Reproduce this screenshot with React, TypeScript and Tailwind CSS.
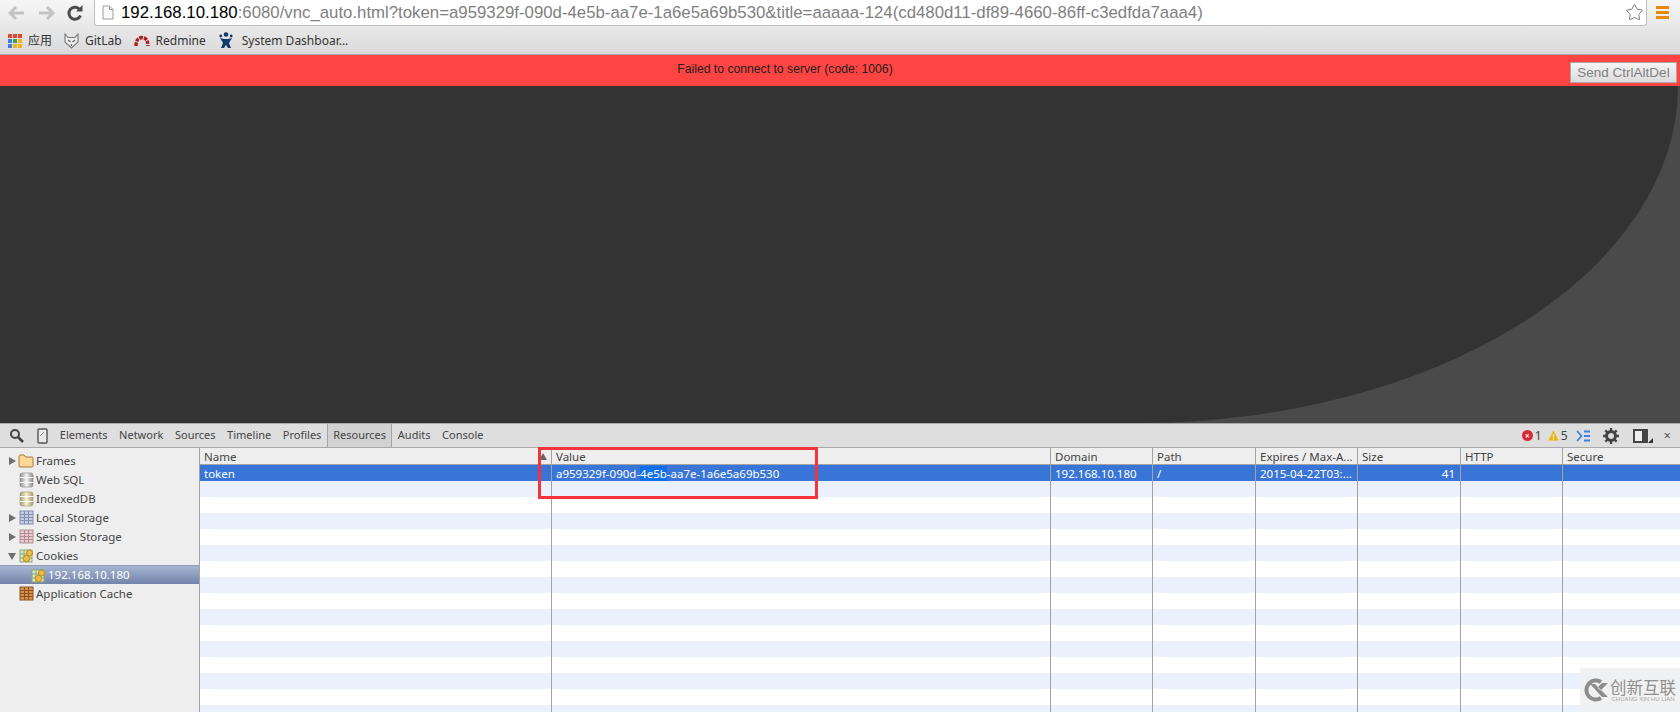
import { Star } from 'lucide-react';

const uiFont = "font-['Noto_Sans','Noto_Sans_CJK_SC',sans-serif]";

function TableIcon({ fill, line }: { fill: string; line: string }) {
  return (
    <svg width="15" height="15" viewBox="0 0 15 15" className="shrink-0">
      <rect x="1" y="1" width="13" height="13" fill={fill} stroke={line} />
      <path d="M1 4.5H14M1 7.5H14M1 10.5H14M5.5 1V14M9.5 1V14" stroke={line} fill="none" />
    </svg>
  );
}

function CookieIcon() {
  return (
    <svg width="15" height="15" viewBox="0 0 15 15" className="shrink-0">
      <rect x="1" y="2" width="12" height="12" fill="#d6e8bd" stroke="#8aa877" />
      <path d="M1 6H13M1 10H13M5 2V14M9 2V14" stroke="#8aa877" fill="none" />
      <circle cx="10.5" cy="5" r="3" fill="#eebc3e" stroke="#b98d28" />
      <circle cx="7.5" cy="10.5" r="3.2" fill="#eebc3e" stroke="#b98d28" />
    </svg>
  );
}

function DbIcon({ light, dark }: { light: string; dark: string }) {
  return (
    <svg width="15" height="16" viewBox="0 0 15 16" className="shrink-0">
      <defs>
        <linearGradient id={`db${dark.slice(1)}`} x1="0" x2="1" y1="0" y2="0">
          <stop offset="0" stopColor={dark} />
          <stop offset="0.5" stopColor={light} />
          <stop offset="1" stopColor={dark} />
        </linearGradient>
      </defs>
      <rect x="1" y="1" width="13" height="14" rx="2" fill={`url(#db${dark.slice(1)})`} stroke={dark} strokeWidth="0.6" />
      <path d="M1 5.5H14M1 10.5H14" stroke="#fff" strokeWidth="1.2" />
    </svg>
  );
}

function FolderIcon() {
  return (
    <svg width="16" height="14" viewBox="0 0 16 14" className="shrink-0">
      <path d="M1 2.5Q1 1 2.5 1H6L7.5 3H14Q15 3 15 4V12Q15 13 14 13H2Q1 13 1 12Z" fill="#fcd79a" stroke="#a87a34" />
    </svg>
  );
}

function Arrow({ open }: { open?: boolean }) {
  return (
    <svg width="8" height="8" viewBox="0 0 8 8" className="shrink-0">
      <path d={open ? 'M0 1H8L4 8Z' : 'M1 0L8 4L1 8Z'} fill="#6e6e6e" />
    </svg>
  );
}

function SideRow({ icon, label, arrow, open }: { icon: React.ReactNode; label: string; arrow?: boolean; open?: boolean }) {
  return (
    <div className="flex h-[19px] items-center pl-[8px] text-[11.5px] text-[#444]">
      <div className="w-[10px]">{arrow && <Arrow open={open} />}</div>
      <div className="flex w-[16px] justify-center">{icon}</div>
      <span className="ml-[2px]">{label}</span>
    </div>
  );
}

function GitlabIcon() {
  return (
    <svg width="15" height="16" viewBox="0 0 15 16" className="shrink-0">
      <path d="M1 1L4 4.5H11L14 1V9L7.5 15L1 9Z" fill="#eee" stroke="#777" strokeWidth="1.1" />
      <path d="M4 7L6.5 9M11 7L8.5 9M7.5 11V13" stroke="#666" strokeWidth="1.3" />
    </svg>
  );
}

function RedmineIcon() {
  return (
    <svg width="16" height="12" viewBox="0 0 16 12" className="shrink-0">
      <path d="M2 11Q2 3 8 2.5Q14 3 14 11" fill="none" stroke="#b31c1c" strokeWidth="3.4" strokeDasharray="3.4 1" />
    </svg>
  );
}

function JiraIcon() {
  return (
    <svg width="14" height="17" viewBox="0 0 14 17" className="shrink-0">
      <circle cx="7" cy="2.5" r="2.3" fill="#0f3a6d" />
      <circle cx="1.8" cy="4" r="1.4" fill="#0f3a6d" />
      <circle cx="12.2" cy="4" r="1.4" fill="#0f3a6d" />
      <path d="M1 6L5 7H9L13 6L10 11L12 16H9L7 13L5 16H2L4 11Z" fill="#0f3a6d" />
    </svg>
  );
}

function AppsIcon() {
  const colors = ['#e0452f', '#e0452f', '#e0452f', '#3b7de0', '#3fa14e', '#f3b21b', '#3b7de0', '#f3b21b', '#f3b21b'];
  return (
    <div className="grid w-[14px] grid-cols-3 gap-[1px]">
      {colors.map((c, i) => (
        <div key={i} className="h-[4px] w-[4px]" style={{ background: c }} />
      ))}
    </div>
  );
}

function ChromeBar() {
  return (
    <div className="h-[55px] shrink-0 border-b border-[#a9a9a9] bg-linear-to-b from-[#f6f6f6] to-[#dadada]">
      <div className="flex h-[27px] items-start">
        <div className="flex h-[26px] w-[94px] items-center">
          <svg width="18" height="16" viewBox="0 0 18 16" className="ml-[8px]">
            <path d="M8 2L2 8L8 14M2 8H16" fill="none" stroke="#c3c3c3" strokeWidth="3" />
          </svg>
          <svg width="18" height="16" viewBox="0 0 18 16" className="ml-[11px]">
            <path d="M10 2L16 8L10 14M16 8H2" fill="none" stroke="#c3c3c3" strokeWidth="3" />
          </svg>
          <svg width="18" height="18" viewBox="0 0 18 18" className="ml-[11px]">
            <path d="M14.5 11.5A6 6 0 1 1 13 4.8" fill="none" stroke="#4a4a4a" strokeWidth="3" />
            <path d="M10 7.5H16.5V1Z" fill="#4a4a4a" />
          </svg>
        </div>
        <div className="flex h-[26px] w-[1553px] items-center rounded-b-[3px] border border-t-0 border-[#bdbdbd] bg-white">
          <svg width="12" height="15" viewBox="0 0 12 15" className="ml-[7px] shrink-0">
            <path d="M1 1H7.5L11 4.5V14H1ZM7.5 1V4.5H11" fill="#fafafa" stroke="#9d9d9d" />
          </svg>
          <span className="ml-[7px] whitespace-nowrap font-['Liberation_Sans',sans-serif] text-[16.8px] text-[#7f7f7f]">
            <span className="text-black">192.168.10.180</span>
            :6080/vnc_auto.html?token=a959329f-090d-4e5b-aa7e-1a6e5a69b530&amp;title=aaaaa-124(cd480d11-df89-4660-86ff-c3edfda7aaa4)
          </span>
          <Star size={19} strokeWidth={1.1} className="ml-auto mr-[2px] text-[#666]" />
        </div>
        <div className="ml-[9px] mt-[6px] flex w-[13px] flex-col gap-[2px]">
          <div className="h-[3px] bg-[#e8890c]" />
          <div className="h-[3px] bg-[#e8890c]" />
          <div className="h-[3px] bg-[#e8890c]" />
        </div>
      </div>
      <div className={`flex h-[27px] items-center pl-[8px] text-[12px] text-[#333] ${uiFont}`}>
        <AppsIcon />
        <span className="ml-[6px]">应用</span>
        <div className="ml-[12px]"><GitlabIcon /></div>
        <span className="ml-[6px]">GitLab</span>
        <div className="ml-[12px]"><RedmineIcon /></div>
        <span className="ml-[6px]">Redmine</span>
        <div className="ml-[13px]"><JiraIcon /></div>
        <span className="ml-[9px]">System Dashboar...</span>
      </div>
    </div>
  );
}

function VncPanel() {
  return (
    <div className="flex min-h-0 flex-1 flex-col">
      <div className="relative flex h-[31px] shrink-0 items-center justify-center bg-[#ff4444] pb-[3px] pr-[110px] font-['Liberation_Sans',sans-serif] text-[12.2px] text-[#222]">
        Failed to connect to server (code: 1006)
        <button className="absolute right-[3px] top-[7px] h-[21px] w-[107px] border border-[#a8a8a8] bg-linear-to-b from-[#f5f5f5] to-[#dcdcdc] text-[13.5px] leading-[17px] text-[#808080]">
          Send CtrlAltDel
        </button>
      </div>
      <div className="flex-1 bg-[#4a4a4a]">
        <div className="mr-[2px] h-full rounded-br-[540px_337px] bg-[#333333]" />
      </div>
    </div>
  );
}

const tabs = ['Elements', 'Network', 'Sources', 'Timeline', 'Profiles', 'Resources', 'Audits', 'Console'];

function DevToolbar() {
  return (
    <div className={`flex h-[25px] shrink-0 items-center border-y border-[#a9a9a9] bg-[#dedede] text-[11px] text-[#444] ${uiFont}`}>
      <svg width="15" height="15" viewBox="0 0 15 15" className="ml-[9px]">
        <circle cx="6" cy="6" r="4" fill="none" stroke="#444" strokeWidth="2" />
        <path d="M9 9L14 14" stroke="#444" strokeWidth="2.6" />
      </svg>
      <svg width="11" height="16" viewBox="0 0 11 16" className="ml-[13px]">
        <rect x="1" y="1" width="9" height="14" rx="1" fill="#e8e8e8" stroke="#555" strokeWidth="1.4" />
        <path d="M3 8L7 4" stroke="#999" />
      </svg>
      <div className="ml-[6px] flex items-center">
        {tabs.map((t) => (
          <div
            key={t}
            className={t === 'Resources' ? 'flex h-[23px] items-center border-x border-[#a3a3a3] bg-[#d2d2d2] px-[5px]' : 'flex h-[23px] items-center px-[5.8px]'}
          >
            {t}
          </div>
        ))}
      </div>
      <div className="ml-auto flex items-center text-[12px]">
        <div className="flex h-[11px] w-[11px] items-center justify-center rounded-full bg-[#d9283a] text-[8px] font-bold leading-none text-white">×</div>
        <span className="ml-[2px]">1</span>
        <svg width="11" height="11" viewBox="0 0 11 11" className="ml-[6px]">
          <path d="M5.5 0.5L10.5 10.5H0.5Z" fill="#eeb200" />
          <path d="M5.5 4V7.5M5.5 8.5V9.8" stroke="#fff" strokeWidth="1.2" />
        </svg>
        <span className="ml-[2px]">5</span>
        <svg width="15" height="12" viewBox="0 0 15 12" className="ml-[8px]">
          <path d="M1 1L5.5 6L1 11" fill="none" stroke="#3d7fe6" strokeWidth="1.8" />
          <path d="M8 1.5H14M8 6H14M8 10.5H14" stroke="#3d7fe6" strokeWidth="1.8" />
        </svg>
        <svg width="16" height="16" viewBox="0 0 16 16" className="ml-[12px]">
          <circle cx="8" cy="8" r="4.5" fill="none" stroke="#444" strokeWidth="3" />
          <path d="M8 0V16M0 8H16M2.3 2.3L13.7 13.7M13.7 2.3L2.3 13.7" stroke="#444" strokeWidth="2.4" strokeDasharray="3 10 3" />
        </svg>
        <div className="ml-[14px] flex h-[14px] w-[15px] border-2 border-[#444] bg-[#eeeeee]">
          <div className="ml-auto h-full w-[4px] bg-[#444]" />
        </div>
        <svg width="5" height="5" viewBox="0 0 5 5" className="mt-[10px]">
          <path d="M5 0V5H0Z" fill="#333" />
        </svg>
        <span className="ml-[11px] mr-[9px] text-[13px] leading-none text-[#555]">×</span>
      </div>
    </div>
  );
}

function Sidebar() {
  return (
    <div className="w-[200px] shrink-0 border-r border-[#a3a3a3] bg-[#eeeeee] pt-[3px]">
      <SideRow arrow icon={<FolderIcon />} label="Frames" />
      <SideRow icon={<DbIcon light="#f4f4f4" dark="#8d8d8d" />} label="Web SQL" />
      <SideRow icon={<DbIcon light="#f6f0d9" dark="#a59a6c" />} label="IndexedDB" />
      <SideRow arrow icon={<TableIcon fill="#c3cde4" line="#858fb0" />} label="Local Storage" />
      <SideRow arrow icon={<TableIcon fill="#ecc8d0" line="#b58d97" />} label="Session Storage" />
      <SideRow arrow open icon={<CookieIcon />} label="Cookies" />
      <div className="flex h-[19px] items-center border-t border-[#8e9cb8] bg-linear-to-b from-[#a5b5d1] to-[#7383aa] pl-[31px] text-[11.5px] text-white">
        <CookieIcon />
        <span className="ml-[2px]">192.168.10.180</span>
      </div>
      <SideRow icon={<TableIcon fill="#d98f4a" line="#8a5320" />} label="Application Cache" />
    </div>
  );
}

const columns = [
  { name: 'Name', width: 'w-[351px]', value: 'token' },
  { name: 'Value', width: 'w-[499px]', value: 'a959329f-090d-4e5b-aa7e-1a6e5a69b530' },
  { name: 'Domain', width: 'w-[102px]', value: '192.168.10.180' },
  { name: 'Path', width: 'w-[103px]', value: '/' },
  { name: 'Expires / Max-A...', width: 'w-[102px]', value: '2015-04-22T03:...' },
  { name: 'Size', width: 'w-[103px]', value: '41' },
  { name: 'HTTP', width: 'w-[102px]', value: '' },
  { name: 'Secure', width: 'flex-1', value: '' },
];

function CookieTable() {
  const blank = Array.from({ length: 15 }, (_, i) => i);
  return (
    <div className="relative min-w-0 flex-1 bg-white">
      <div className="flex h-[17px] border-b border-[#a3a3a3] bg-[#eeeeee] text-[11.5px] leading-[18px] text-[#444]">
        {columns.map((c, i) => (
          <div key={c.name} className={`${c.width} whitespace-nowrap overflow-hidden px-[4px] ${i > 0 ? 'border-l border-[#a3a3a3]' : ''}`}>
            {c.name}
          </div>
        ))}
      </div>
      <div className="flex h-[16px] bg-[#3875d7] text-[11.5px] leading-[17px] text-white">
        {columns.map((c, i) => (
          <div
            key={c.name}
            className={`${c.width} whitespace-nowrap px-[4px] ${i > 0 ? 'border-l border-[#a3a3a3]' : ''} ${c.name === 'Size' ? 'pr-[5px] text-right' : ''}`}
          >
            {c.name === 'Value' ? (
              <>
                a959329f-090d-<span className="bg-[#0f6fe8]">4e5b</span>-aa7e-1a6e5a69b530
              </>
            ) : (
              c.value
            )}
          </div>
        ))}
      </div>
      {blank.map((r) => (
        <div key={r} className={`flex h-[16px] ${r % 2 === 0 ? 'bg-[#eaf1fc]' : 'bg-white'}`}>
          {columns.map((c, i) => (
            <div key={c.name} className={`${c.width} ${i > 0 ? 'border-l border-[#a3a3a3]' : ''}`} />
          ))}
        </div>
      ))}
      {/* sort arrow on the name column */}
      <svg width="8" height="7" viewBox="0 0 8 7" className="absolute left-[339px] top-[5px]">
        <path d="M4 0L8 7H0Z" fill="#666" />
      </svg>
      {/* annotation box */}
      <div className="absolute left-[338px] top-[-1px] h-[52px] w-[280px] border-[3px] border-[#f5333a]" />
    </div>
  );
}

function Watermark() {
  return (
    <div className="absolute bottom-0 right-0 flex h-[44px] w-[100px] items-center bg-[#f0f0f0]/90 pl-[3px]">
      <svg width="26" height="26" viewBox="0 0 26 26" className="shrink-0">
        <path d="M18 5A9.5 9.5 0 1 0 18 21" fill="none" stroke="#8d8d8d" strokeWidth="4" />
        <path d="M7 7L12 7L25 20L19 20ZM25 6L19 6L14.5 10.5L17.5 13.5Z" fill="#8d8d8d" />
      </svg>
      <div className="ml-[1px] flex flex-col items-center">
        <span className="font-['Noto_Sans_CJK_SC',sans-serif] text-[16.5px] leading-[18px] text-[#8f8f8f]">创新互联</span>
        <span className="whitespace-nowrap font-['Liberation_Sans',sans-serif] text-[6px] leading-[6px] text-[#a5a5a5]">CHUANG XIN HU LIAN</span>
      </div>
    </div>
  );
}

export default function App() {
  return (
    <div className="relative flex h-[712px] w-[1680px] flex-col overflow-hidden">
      <ChromeBar />
      <VncPanel />
      <div className="flex h-[289px] shrink-0 flex-col">
        <DevToolbar />
        <div className={`flex min-h-0 flex-1 ${uiFont}`}>
          <Sidebar />
          <CookieTable />
        </div>
      </div>
      <Watermark />
    </div>
  );
}
